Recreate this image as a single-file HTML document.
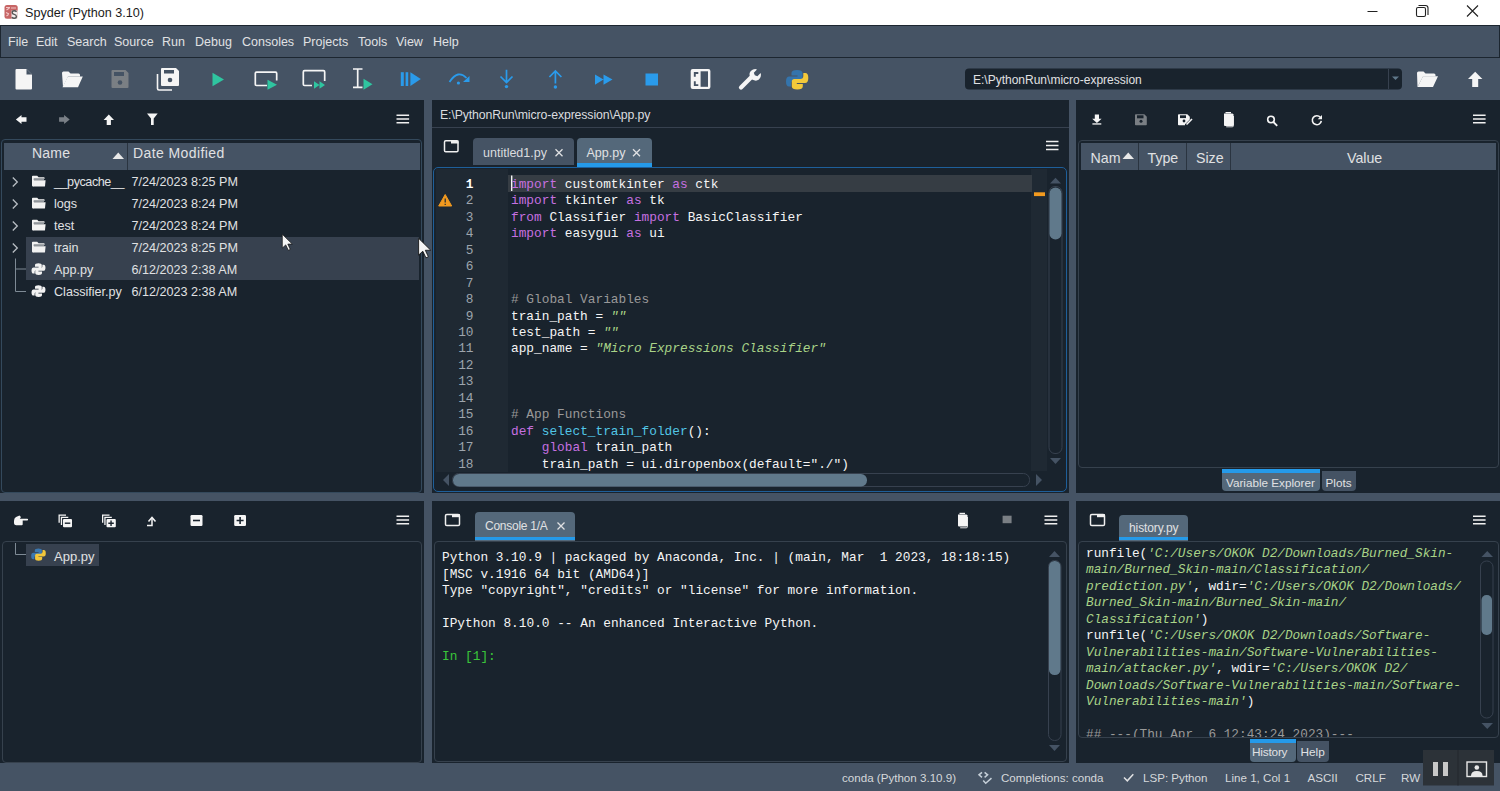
<!DOCTYPE html>
<html><head><meta charset="utf-8">
<style>
*{box-sizing:border-box;margin:0;padding:0}
html,body{width:1500px;height:791px;overflow:hidden;background:#455364;font-family:"Liberation Sans",sans-serif;position:relative}
.a{position:absolute}
.t{position:absolute;white-space:pre;line-height:1;color:#E0E1E3;font-size:13px}
.mn{font-size:12.5px;color:#E0E1E3}
.fe{font-size:12.6px;color:#E0E1E3}
.sb{font-size:11.6px;color:#D5D8DB}
.m{font-family:"Liberation Mono",monospace}
.k{font-style:normal;color:#C670E0}.c{font-style:normal;color:#999}.s{font-style:italic;color:#A9D488}.d{font-style:normal;color:#52C6E6}
.pane{position:absolute;background:#19232D}
svg{position:absolute;overflow:visible}
</style></head><body>
<!-- title bar -->
<div class="a" style="left:0;top:0;width:1500px;height:25px;background:#fff"></div>
<svg style="left:0;top:0" width="1500" height="25">
 <rect x="4.5" y="5" width="13.2" height="13.7" rx="2.5" fill="#C76565"/>
 <path d="M6 7.5 h4 M6.5 10 l3 -2 M6 12.5 l3 1.5 M6.5 16 l2 -1.5 M11 8 h5" stroke="#F2C6C6" stroke-width="1.1" fill="none"/>
 <rect x="11.5" y="10.5" width="6.2" height="8.2" fill="#F4EEEE"/>
 <path d="M16.6 11.8 q-1 -1 -2.4 -1 q-2 0 -2 1.7 q0 1.5 2 1.9 q2.2 .4 2.2 2 q0 1.8 -2.2 1.8 q-1.5 0 -2.5 -1" stroke="#555" stroke-width="1.4" fill="none"/>
 <path d="M1367.5 11.5 h10" stroke="#222" stroke-width="1"/>
 <rect x="1416.5" y="7.5" width="9" height="9" rx="1.5" fill="none" stroke="#222" stroke-width="1.1"/>
 <path d="M1418.5 5.5 h7 q2.5 0 2.5 2.5 v7" fill="none" stroke="#222" stroke-width="1.1"/>
 <path d="M1467 5.5 L1478 16.5 M1478 5.5 L1467 16.5" stroke="#222" stroke-width="1.1"/>
</svg>
<div class="t" style="left:25px;top:7px;color:#1b1b1b;font-size:12.6px">Spyder (Python 3.10)</div>

<!-- menubar -->
<div class="a" style="left:0;top:25px;width:1500px;height:33px;background:#455364;border:1px solid #1c2630"></div>
<div class="t mn" style="left:8px;top:36px">File</div>
<div class="t mn" style="left:36px;top:36px">Edit</div>
<div class="t mn" style="left:67px;top:36px">Search</div>
<div class="t mn" style="left:114px;top:36px">Source</div>
<div class="t mn" style="left:162px;top:36px">Run</div>
<div class="t mn" style="left:195px;top:36px">Debug</div>
<div class="t mn" style="left:242px;top:36px">Consoles</div>
<div class="t mn" style="left:303px;top:36px">Projects</div>
<div class="t mn" style="left:358px;top:36px">Tools</div>
<div class="t mn" style="left:396px;top:36px">View</div>
<div class="t mn" style="left:433px;top:36px">Help</div>

<!-- toolbar -->
<svg style="left:0;top:58px" width="1500" height="42" viewBox="0 58 1500 42">
 <!-- new file -->
 <path d="M15.5 70 q0 -1 1 -1 h10 l5.5 5.5 v14 q0 1 -1 1 h-14.5 q-1 0 -1 -1 z" fill="#F5F5F5"/>
 <path d="M26.5 69 v5.5 h5.5 z" fill="#455364"/>
 <!-- open folder -->
 <path d="M62 73 q0 -1.5 1.5 -1.5 h5 l2 2 h8 q1.5 0 1.5 1.5 v1.5 h-12 l-5 10.5 z" fill="#F5F5F5"/>
 <path d="M62.5 87.3 l5.3 -10.8 h15 l-4.8 10.8 z" fill="#F5F5F5"/>
 <!-- save gray -->
 <path d="M111.5 71 q0 -1 1 -1 h13 l3 3 v14 q0 1 -1 1 h-15 q-1 0 -1 -1 z" fill="#7A7F84"/>
 <rect x="114" y="72" width="10" height="4" fill="#455364"/>
 <circle cx="120" cy="82.5" r="2.3" fill="#455364"/>
 <!-- save all -->
 <path d="M157.5 74 v14.5 q0 1.5 1.5 1.5 h13" fill="none" stroke="#F5F5F5" stroke-width="1.6"/>
 <path d="M161 69 q0 -1 1 -1 h14 l3 3 v14 q0 1 -1 1 h-16 q-1 0 -1 -1 z" fill="#F5F5F5"/>
 <rect x="164" y="70" width="10" height="3.5" fill="#455364"/>
 <circle cx="170" cy="80" r="2.3" fill="#455364"/>
 <!-- run -->
 <path d="M212.5 72.7 L224 79.5 L212.5 86.3 z" fill="#2FC5A0"/>
 <!-- run cell -->
 <path d="M267 85.5 h-10.5 q-1.2 0 -1.2 -1.2 v-10.9 q0 -1.2 1.2 -1.2 h19 q1.2 0 1.2 1.2 v7" fill="none" stroke="#F5F5F5" stroke-width="1.7"/>
 <path d="M267.5 79.7 L277 84.7 L267.5 89.7 z" fill="#2FC5A0"/>
 <!-- run cell advance -->
 <path d="M312 85.5 h-7.5 q-1.2 0 -1.2 -1.2 v-12.4 q0 -1.2 1.2 -1.2 h19 q1.2 0 1.2 1.2 v9" fill="none" stroke="#F5F5F5" stroke-width="1.7"/>
 <path d="M314 81.3 L319.5 85 L314 88.8 z M319.5 81.3 L325 85 L319.5 88.8 z" fill="#2FC5A0"/>
 <!-- run selection -->
 <path d="M353 69 h9.5 M357.7 69 v18.3 M353 87.3 h9.5" stroke="#F5F5F5" stroke-width="1.7" fill="none"/>
 <path d="M363.5 78.8 L372.5 84.2 L363.5 89.7 z" fill="#2FC5A0"/>
 <!-- debug -->
 <rect x="400.8" y="72.2" width="3" height="13.8" fill="#2A9BEB"/>
 <rect x="405.6" y="72.2" width="2.6" height="13.8" fill="#2A9BEB"/>
 <path d="M410.4 72.2 L420.8 79.1 L410.4 86 z" fill="#2A9BEB"/>
 <!-- step over -->
 <path d="M449.5 82 q8.5 -13 17 -4" fill="none" stroke="#2A9BEB" stroke-width="1.8"/>
 <path d="M469.5 76 v6 h-6.5 z" fill="#2A9BEB"/>
 <circle cx="458.4" cy="83" r="1.6" fill="#2A9BEB"/>
 <!-- step into -->
 <path d="M506.5 69.8 v12.6 M500.5 76.5 l6 6 l6 -6" fill="none" stroke="#2A9BEB" stroke-width="1.7"/>
 <circle cx="506.5" cy="86.6" r="1.7" fill="#2A9BEB"/>
 <!-- step return -->
 <path d="M555.4 71 v12.6 M549.4 77 l6 -6 l6 6" fill="none" stroke="#2A9BEB" stroke-width="1.7"/>
 <circle cx="555.4" cy="87" r="1.7" fill="#2A9BEB"/>
 <!-- continue -->
 <path d="M595 74.5 L603.5 79.6 L595 84.7 z M603.5 74.5 L612.5 79.6 L603.5 84.7 z" fill="#2A9BEB"/>
 <!-- stop -->
 <rect x="645.5" y="73.5" width="12.5" height="12" fill="#2A9BEB"/>
 <!-- maximize -->
 <rect x="690.7" y="69" width="19.7" height="20.1" rx="2" fill="#F5F5F5"/>
 <rect x="700.6" y="71.3" width="7.4" height="15.5" fill="#455364"/>
 <path d="M698.3 73 h-3.5 v3.8 M698.3 85.1 h-3.5 v-3.8" fill="none" stroke="#455364" stroke-width="1.9"/>
 <!-- wrench -->
 <path d="M741 87.5 L752 76.5" stroke="#F5F5F5" stroke-width="4.2" stroke-linecap="round"/>
 <path d="M750.5 78 q-3 -6 2.5 -8.5 q2.5 -.8 4 0 l-3.2 3.2 l1 2.6 l2.6 1 l3.2 -3.2 q.8 1.5 0 4 q-2.5 5.5 -8.5 2.5 z" fill="#F5F5F5"/>
 <!-- python -->
 <path d="M797 70 q-5.5 0 -5.5 3 v2.5 h6 v1 h-8.2 q-3.3 0 -3.3 5 q0 5 3 5 h2 v-3 q0 -3 3 -3 h6 q2.5 0 2.5 -2.5 v-5 q0 -3 -5.5 -3 z" fill="#3474AC"/>
 <path d="M797.3 89.6 q5.5 0 5.5 -3 v-2.5 h-6 v-1 h8.2 q3.3 0 3.3 -5 q0 -5 -3 -5 h-2 v3 q0 3 -3 3 h-6 q-2.5 0 -2.5 2.5 v5 q0 3 5.5 3 z" fill="#F3C93A"/>
 <!-- combobox -->
 <rect x="965" y="68.5" width="437" height="21" rx="4" fill="#19232D"/>
 <path d="M1388.5 69 v20" stroke="#37414F" stroke-width="1"/>
 <path d="M1392 76.5 h7 l-3.5 3.5 z" fill="#60798B"/>
 <!-- folder open right -->
 <path d="M1417 73 q0 -1.5 1.5 -1.5 h5 l2 2 h8.5 q1.5 0 1.5 1.5 v1.5 h-12.5 l-5.5 10.5 z" fill="#F5F5F5"/>
 <path d="M1417.5 87.1 l5.5 -10.8 h15 l-5 10.8 z" fill="#F5F5F5"/>
 <!-- up arrow -->
 <path d="M1475.2 71.8 l7.2 7.3 h-4.2 v8 h-6 v-8 h-4.2 z" fill="#F5F5F5"/>
</svg>
<div class="t" style="left:973px;top:74px;font-size:12px;color:#E0E1E3">E:\PythonRun\micro-expression</div>
<!-- panes -->
<div class="pane" style="left:0;top:100px;width:424px;height:393px"></div>
<div class="pane" style="left:432px;top:100px;width:637px;height:393px"></div>
<div class="pane" style="left:1076px;top:100px;width:424px;height:393px"></div>
<div class="pane" style="left:0;top:501px;width:424px;height:262px"></div>
<div class="pane" style="left:432px;top:501px;width:637px;height:262px"></div>
<div class="pane" style="left:1076px;top:501px;width:424px;height:262px"></div>
<!-- ===== file explorer ===== -->
<div class="a" style="left:1px;top:139px;width:421px;height:354px;border:1px solid #34495C;border-radius:4px"></div>
<div class="a" style="left:4px;top:143px;width:416px;height:27px;background:#455364"></div>
<div class="a" style="left:127px;top:143px;width:1px;height:27px;background:#2a3440"></div>
<div class="a" style="left:26px;top:236.5px;width:393px;height:43px;background:#37414F"></div>
<svg style="left:0;top:100px" width="424" height="392" viewBox="0 100 424 392">
 <path d="M15.9 119.5 l5.6 -4.5 v2.3 h5 v4.4 h-5 v2.3 z" fill="#F5F5F5"/>
 <path d="M69.7 119.5 l-5.6 -4.5 v2.3 h-5 v4.4 h5 v2.3 z" fill="#7A8087"/>
 <path d="M108.8 114.6 l5.2 5.5 h-3.1 v4.8 h-4.2 v-4.8 h-3.1 z" fill="#F5F5F5"/>
 <path d="M147 113.5 h10.7 l-4 5 v6.5 h-2.7 v-6.5 z" fill="#F5F5F5"/>
 <path d="M396.5 115.3 h12.6 M396.5 119 h12.6 M396.5 122.7 h12.6" stroke="#F0F0F0" stroke-width="1.5"/>
 <!-- sort arrow -->
 <path d="M112.5 159 l5.75 -6.5 l5.75 6.5 z" fill="#E8E8E8"/>
 <!-- chevrons -->
 <g fill="none" stroke="#B8BEC4" stroke-width="1.3">
  <path d="M12.8 177.5 l4.5 4.5 l-4.5 4.5"/>
  <path d="M12.8 199.5 l4.5 4.5 l-4.5 4.5"/>
  <path d="M12.8 221.5 l4.5 4.5 l-4.5 4.5"/>
  <path d="M12.8 243.5 l4.5 4.5 l-4.5 4.5"/>
 </g>
 <!-- tree lines -->
 <path d="M15.5 258.5 v33 h10.5 M15.5 269 h10.5" fill="none" stroke="#7E8A95" stroke-width="1"/>
 <!-- folders -->
 <g fill="#F2F2F2">
  <g id="fd"><path d="M32 176.6 q0 -.8 .8 -.8 h4.4 l1.4 1.5 h5.4 q.6 0 .6 .6 v.9 h-10.6 v7.6 h-1 q-1 0 -1 -1 z"/><path d="M33.6 178.4 h10.4 v1.7 h-10.4 z" fill="#8F949A"/><path d="M33.6 180.2 h12 l-.6 5.7 q-.1 .5 -.6 .5 h-10.8 z"/></g>
  <use href="#fd" y="22"/><use href="#fd" y="44"/><use href="#fd" y="66"/>
 </g>
 <g id="pyw" fill="#F2F2F2" transform="translate(38.5 269.1) scale(0.86) translate(-38.3 -270.5)">
  <path d="M38.2 263.7 q-4 0 -4 2.2 v1.8 h4.2 v.8 h-5.8 q-2.4 0 -2.4 3.6 q0 3.6 2.2 3.6 h1.4 v-2.1 q0 -2.2 2.2 -2.2 h4.3 q1.8 0 1.8 -1.8 v-3.7 q0 -2.2 -3.9 -2.2 z"/>
  <path d="M38.4 277.3 q4 0 4 -2.2 v-1.8 h-4.2 v-.8 h5.8 q2.4 0 2.4 -3.6 q0 -3.6 -2.2 -3.6 h-1.4 v2.1 q0 2.2 -2.2 2.2 h-4.3 q-1.8 0 -1.8 1.8 v3.7 q0 2.2 3.9 2.2 z"/>
 </g>
 <use href="#pyw" y="22"/>
</svg>
<div class="t" style="left:32px;top:145.7px;font-size:14px;letter-spacing:0.2px">Name</div>
<div class="t" style="left:133px;top:145.7px;font-size:14px;letter-spacing:0.4px">Date Modified</div>
<div class="t fe" style="left:54px;top:176px;letter-spacing:-0.45px">__pycache__</div>
<div class="t fe" style="left:54px;top:198px">logs</div>
<div class="t fe" style="left:54px;top:220px">test</div>
<div class="t fe" style="left:54px;top:242px">train</div>
<div class="t fe" style="left:54px;top:264px">App.py</div>
<div class="t fe" style="left:54px;top:286px">Classifier.py</div>
<div class="t fe" style="left:131.5px;top:176px">7/24/2023 8:25 PM</div>
<div class="t fe" style="left:131.5px;top:198px">7/24/2023 8:24 PM</div>
<div class="t fe" style="left:131.5px;top:220px">7/24/2023 8:24 PM</div>
<div class="t fe" style="left:131.5px;top:242px">7/24/2023 8:25 PM</div>
<div class="t fe" style="left:131.5px;top:264px">6/12/2023 2:38 AM</div>
<div class="t fe" style="left:131.5px;top:286px">6/12/2023 2:38 AM</div>
<!-- ===== editor ===== -->
<div class="t" style="left:440px;top:108.5px;font-size:12.3px;letter-spacing:-0.12px;color:#DADCDF">E:\PythonRun\micro-expression\App.py</div>
<div class="a" style="left:432px;top:126.5px;width:637px;height:1px;background:#37414F"></div>
<!-- tabs -->
<div class="a" style="left:473px;top:138px;width:101px;height:26.5px;background:#455364;border-radius:4px 4px 0 0"></div>
<div class="a" style="left:577px;top:138px;width:75px;height:29px;background:#54687A;border-radius:4px 4px 0 0"></div>
<div class="a" style="left:577px;top:163px;width:75px;height:4px;background:#259AE9"></div>
<div class="t" style="left:483px;top:147.3px;font-size:12.5px;color:#DADCDF">untitled1.py</div>
<div class="t" style="left:586.5px;top:147.3px;font-size:12.5px;color:#E0E1E3">App.py</div>
<!-- editor box -->
<div class="a" style="left:433px;top:167px;width:634px;height:325px;border:1.5px solid #1E5F9A;border-radius:5px;background:#19232D"></div>
<div class="a" style="left:435.5px;top:169px;width:72.5px;height:302.5px;background:#1F2933"></div>
<div class="a" style="left:1031px;top:169px;width:16px;height:302px;background:#1F2933"></div>
<div class="a" style="left:508px;top:175px;width:523.5px;height:16.5px;background:#363D44"></div>
<svg style="left:432px;top:100px" width="637" height="392" viewBox="432 100 637 392">
 <!-- window icon -->
 <rect x="444.5" y="140.8" width="13.5" height="11" rx="1.3" fill="none" stroke="#F0F0F0" stroke-width="1.5"/>
 <rect x="451" y="140.5" width="7.5" height="3" fill="#F0F0F0"/>
 <!-- close x -->
 <path d="M555.5 149.3 l7 7 M562.5 149.3 l-7 7" stroke="#E0E1E3" stroke-width="1.3"/>
 <path d="M633 149.3 l7 7 M640 149.3 l-7 7" stroke="#E0E1E3" stroke-width="1.3"/>
 <!-- hamburger -->
 <path d="M1046 141.5 h12.5 M1046 145.5 h12.5 M1046 149.5 h12.5" stroke="#F0F0F0" stroke-width="1.5"/>
 <!-- warning -->
 <path d="M445.2 194.5 l6.5 11.5 h-13 z" fill="#F29A1F" stroke="#F29A1F" stroke-width="1" stroke-linejoin="round"/>
 <path d="M445.2 198.5 v4 M445.2 203.8 v1.2" stroke="#1F2933" stroke-width="1.2"/>
 <!-- cursor -->
 <rect x="511" y="175.5" width="1.4" height="15.5" fill="#F5F5F5"/>
 <!-- flag -->
 <rect x="1034" y="192.3" width="11" height="3.8" fill="#F29A1F"/>
 <!-- v scrollbar -->
 <path d="M1050 183.5 l5.5 -5.8 l5.5 5.8 z" fill="#455364"/>
 <rect x="1049" y="186.5" width="13" height="267" rx="6" fill="none" stroke="#37414F" stroke-width="1"/>
 <rect x="1049.5" y="187.5" width="12" height="52" rx="6" fill="#60798B"/>
 <path d="M1050 458 h11 l-5.5 6 z" fill="#455364"/>
 <!-- h scrollbar -->
 <path d="M449 474 v12 l-6 -6 z" fill="#455364"/>
 <rect x="452.5" y="473.5" width="577" height="13" rx="6" fill="none" stroke="#37414F" stroke-width="1"/>
 <rect x="453" y="474" width="414" height="12.5" rx="6" fill="#60798B"/>
 <path d="M1036 474 v12 l6 -6 z" fill="#455364"/>
</svg>
<div class="a m" style="left:435px;top:176.8px;width:38.5px;text-align:right;font-size:12.8px;line-height:16.47px;color:#9DA5AD;white-space:pre"><b style="color:#fff">1</b>
2
3
4
5
6
7
8
9
10
11
12
13
14
15
16
17
18</div>
<div class="a m" style="left:511px;top:176.8px;font-size:12.8px;line-height:16.47px;color:#F5F5F5;white-space:pre"><i class="k">import</i> customtkinter <i class="k">as</i> ctk
<i class="k">import</i> tkinter <i class="k">as</i> tk
<i class="k">from</i> Classifier <i class="k">import</i> BasicClassifier
<i class="k">import</i> easygui <i class="k">as</i> ui



<i class="c"># Global Variables</i>
train_path = <i class="s">""</i>
test_path = <i class="s">""</i>
app_name = <i class="s">"Micro Expressions Classifier"</i>



<i class="c"># App Functions</i>
<i class="k">def</i> <i class="d">select_train_folder</i>():
    <i class="k">global</i> train_path
    train_path = ui.diropenbox(default="./")</div>
<!-- ===== variable explorer ===== -->
<div class="a" style="left:1078px;top:139.5px;width:420.5px;height:328px;border:1px solid #36414D;border-radius:4px"></div>
<div class="a" style="left:1081px;top:143px;width:415px;height:27px;background:#455364"></div>
<div class="a" style="left:1138px;top:143px;width:1px;height:27px;background:#2a3440"></div>
<div class="a" style="left:1186px;top:143px;width:1px;height:27px;background:#2a3440"></div>
<div class="a" style="left:1230px;top:143px;width:1px;height:27px;background:#2a3440"></div>
<div class="t" style="left:1090.5px;top:151px;font-size:14.2px">Nam</div>
<div class="t" style="left:1147.5px;top:151px;font-size:14.2px">Type</div>
<div class="t" style="left:1196px;top:151px;font-size:14.2px">Size</div>
<div class="t" style="left:1347px;top:151px;font-size:14.2px">Value</div>
<!-- bottom tabs -->
<div class="a" style="left:1222px;top:469px;width:98px;height:22px;background:#54687A;border-radius:0 0 4px 4px"></div>
<div class="a" style="left:1222px;top:469px;width:98px;height:3.5px;background:#259AE9"></div>
<div class="a" style="left:1322px;top:471px;width:34px;height:20px;background:#455364;border-radius:0 0 4px 4px"></div>
<div class="t" style="left:1226px;top:476.5px;font-size:11.7px">Variable Explorer</div>
<div class="t" style="left:1325.5px;top:476.5px;font-size:11.7px">Plots</div>
<svg style="left:1076px;top:100px" width="424" height="392" viewBox="1076 100 424 392">
 <g fill="#F5F5F5">
  <!-- download -->
  <path d="M1094.8 114.5 h4.2 v4.3 h2.6 l-4.7 4.3 l-4.7 -4.3 h2.6 z"/>
  <rect x="1092.4" y="123.3" width="8.9" height="1.3"/>
  <!-- save-edit -->
  <path d="M1178 115 q0 -.8 .8 -.8 h8.5 l2.5 2.5 v2.8 l-4.8 4.8 v.9 h-6.2 q-.8 0 -.8 -.8 z"/>
  <!-- trash copies -->
  <path d="M1224 113.5 h8.5 l1 1 v10.5 q0 1 -1 1 h-7.5 q-1 0 -1 -1 z"/>
  <rect x="1225.5" y="112" width="5.5" height="1.3"/>
 </g>
 <path d="M1135 115 q0 -.8 .8 -.8 h8.5 l2.5 2.5 v7.7 q0 .8 -.8 .8 h-10.2 q-.8 0 -.8 -.8 z" fill="#7A7F84"/>
 <rect x="1137" y="115.3" width="6.5" height="3" fill="#19232D"/>
 <circle cx="1141" cy="121.3" r="1.5" fill="#19232D"/>
 <rect x="1180" y="115.3" width="6" height="2.8" fill="#19232D"/>
 <circle cx="1184" cy="121" r="1.4" fill="#19232D"/>
 <path d="M1186.5 124.5 l5.5 -5.5" stroke="#F5F5F5" stroke-width="1.6"/>
 <path d="M1233.5 116 v9.5 q0 1.3 -1.3 1.3 h-6" fill="none" stroke="#F5F5F5" stroke-width=".9"/>
 <circle cx="1271" cy="119.5" r="3.3" fill="none" stroke="#F5F5F5" stroke-width="1.6"/>
 <path d="M1273.4 122 l3.8 3.8" stroke="#F5F5F5" stroke-width="1.8"/>
 <path d="M1320.3 117.3 a4.5 4.5 0 1 0 1 3.5" fill="none" stroke="#F5F5F5" stroke-width="1.6"/>
 <path d="M1322 115 v4.3 h-4.3 z" fill="#F5F5F5"/>
 <path d="M1473 115.3 h12.6 M1473 119 h12.6 M1473 122.7 h12.6" stroke="#F0F0F0" stroke-width="1.5"/>
 <path d="M1122.5 159 l5.75 -6.5 l5.75 6.5 z" fill="#E8E8E8"/>
</svg>
<!-- ===== outline ===== -->
<div class="a" style="left:1.5px;top:541px;width:420px;height:221.5px;border:1px solid #36414D;border-radius:4px"></div>
<div class="a" style="left:26px;top:543.5px;width:72.5px;height:22px;background:#37414F"></div>
<div class="t" style="left:54px;top:549.5px;font-size:13px">App.py</div>
<svg style="left:0;top:501px" width="424" height="262" viewBox="0 501 424 262">
 <g fill="#F5F5F5">
  <!-- hand -->
  <path d="M14 521 q0 -3 2 -4 l3.5 -1.5 l1.5 1.5 l-1.2 1.7 h7.4 q.9 0 .9 .9 q0 .9 -.9 .9 h-4.5 v3.8 q0 1 -1 1 h-5.5 q-2 0 -2.2 -2 z"/>
  <!-- collapse all -->
  <path d="M58.5 514.5 h7.5 v1.3 h-6.2 v7 h-1.3 z M60.8 516.8 h7.5 v1.3 h-6.2 v7 h-1.3 z"/>
  <rect x="63" y="519" width="9" height="8.3" rx="1"/>
  <!-- expand all -->
  <path d="M102 514.5 h7.5 v1.3 h-6.2 v7 h-1.3 z M104.3 516.8 h7.5 v1.3 h-6.2 v7 h-1.3 z"/>
  <rect x="106.5" y="519" width="9.3" height="8.3" rx="1"/>
  <!-- boxes -->
  <rect x="190.5" y="515" width="12" height="11" rx="1.2"/>
  <rect x="234.2" y="515" width="11.8" height="11" rx="1.2"/>
 </g>
 <path d="M64.8 523.2 h5.5" stroke="#19232D" stroke-width="1.4"/>
 <path d="M108.3 523.2 h5.5 M111.05 520.5 v5.5" stroke="#19232D" stroke-width="1.4"/>
 <path d="M193 520.5 h7" stroke="#19232D" stroke-width="1.6"/>
 <path d="M236.6 520.5 h7 M240.1 517 v7" stroke="#19232D" stroke-width="1.6"/>
 <path d="M147 525.5 h5 v-7" fill="none" stroke="#F5F5F5" stroke-width="1.5"/>
 <path d="M148.5 521.5 l3.5 -4 l3.5 4" fill="none" stroke="#F5F5F5" stroke-width="1.5"/>
 <path d="M396.5 516.3 h12.6 M396.5 520 h12.6 M396.5 523.7 h12.6" stroke="#F0F0F0" stroke-width="1.5"/>
 <path d="M15.5 543 v11.5 h10.5" fill="none" stroke="#7E8A95" stroke-width="1"/>
 <!-- python color --><g transform="translate(38.5 554.6) scale(0.9) translate(-38.3 -554.8)">
 <path d="M38.2 548 q-4 0 -4 2.2 v1.8 h4.2 v.8 h-5.8 q-2.4 0 -2.4 3.6 q0 3.6 2.2 3.6 h1.4 v-2.1 q0 -2.2 2.2 -2.2 h4.3 q1.8 0 1.8 -1.8 v-3.7 q0 -2.2 -3.9 -2.2 z" fill="#3B78B0"/>
 <path d="M38.4 561.6 q4 0 4 -2.2 v-1.8 h-4.2 v-.8 h5.8 q2.4 0 2.4 -3.6 q0 -3.6 -2.2 -3.6 h-1.4 v2.1 q0 2.2 -2.2 2.2 h-4.3 q-1.8 0 -1.8 1.8 v3.7 q0 2.2 3.9 2.2 z" fill="#F2C73B"/></g>
</svg>
<!-- ===== console ===== -->
<div class="a" style="left:475px;top:512px;width:100px;height:28.5px;background:#54687A;border-radius:4px 4px 0 0"></div>
<div class="a" style="left:475px;top:536.8px;width:100px;height:3.7px;background:#259AE9"></div>
<div class="t" style="left:485px;top:520px;font-size:12px;letter-spacing:-0.25px">Console 1/A</div>
<div class="a" style="left:434px;top:541.3px;width:632.5px;height:221px;border:1px solid #36414D;border-radius:4px"></div>
<svg style="left:432px;top:501px" width="637" height="262" viewBox="432 501 637 262">
 <rect x="445.5" y="514.5" width="14" height="11" rx="1.3" fill="none" stroke="#F0F0F0" stroke-width="1.5"/>
 <rect x="452" y="514.2" width="8" height="3" fill="#F0F0F0"/>
 <path d="M557.5 522.5 l7 7 M564.5 522.5 l-7 7" stroke="#E0E1E3" stroke-width="1.3"/>
 <!-- trash -->
 <path d="M958 514.5 h8.5 l1 1 v10 q0 1 -1 1 h-7.5 q-1 0 -1 -1 z" fill="#F5F5F5"/>
 <rect x="959.5" y="512.8" width="5.5" height="1.3" fill="#F5F5F5"/>
 <path d="M967.5 517 v9.5 q0 1.3 -1.3 1.3 h-6" fill="none" stroke="#F5F5F5" stroke-width=".9"/>
 <rect x="1002.6" y="515.7" width="9" height="7.5" fill="#7A7F84"/>
 <path d="M1044.5 516.3 h12.8 M1044.5 520 h12.8 M1044.5 523.7 h12.8" stroke="#F0F0F0" stroke-width="1.5"/>
 <!-- scrollbar -->
 <path d="M1049 557 l5.5 -6 l5.5 6 z" fill="#455364"/>
 <rect x="1048.5" y="560.5" width="12.5" height="180" rx="6" fill="none" stroke="#37414F" stroke-width="1"/>
 <rect x="1049" y="561" width="11.5" height="114" rx="5.5" fill="#60798B"/>
 <path d="M1049 745 h11 l-5.5 6 z" fill="#455364"/>
</svg>
<div class="a m" style="left:442px;top:550.3px;font-size:12.8px;line-height:16.5px;color:#F5F5F5;white-space:pre">Python 3.10.9 | packaged by Anaconda, Inc. | (main, Mar  1 2023, 18:18:15)
[MSC v.1916 64 bit (AMD64)]
Type "copyright", "credits" or "license" for more information.

IPython 8.10.0 -- An enhanced Interactive Python.

<span style="color:#39C53A">In [1]:</span></div>
<!-- ===== history ===== -->
<div class="a" style="left:1119px;top:515px;width:69px;height:25.5px;background:#54687A;border-radius:4px 4px 0 0"></div>
<div class="a" style="left:1119px;top:536.8px;width:69px;height:3.7px;background:#259AE9"></div>
<div class="t" style="left:1129px;top:521.5px;font-size:12px;letter-spacing:-0.1px">history.py</div>
<div class="a" style="left:1078px;top:541.3px;width:420.5px;height:197px;border:1px solid #36414D;border-radius:4px"></div>
<div class="a" style="left:1084px;top:543px;width:392px;height:194px;overflow:hidden">
<div class="a m" style="left:2px;top:2.8px;font-size:12.75px;line-height:16.5px;color:#F5F5F5;white-space:pre">runfile(<i class="s">'C:/Users/OKOK D2/Downloads/Burned_Skin-
main/Burned_Skin-main/Classification/
prediction.py'</i>, wdir=<i class="s">'C:/Users/OKOK D2/Downloads/
Burned_Skin-main/Burned_Skin-main/
Classification'</i>)
runfile(<i class="s">'C:/Users/OKOK D2/Downloads/Software-
Vulnerabilities-main/Software-Vulnerabilities-
main/attacker.py'</i>, wdir=<i class="s">'C:/Users/OKOK D2/
Downloads/Software-Vulnerabilities-main/Software-
Vulnerabilities-main'</i>)

<i class="c">## ---(Thu Apr  6 12:43:24 2023)---</i></div></div>
<!-- bottom tabs -->
<div class="a" style="left:1250px;top:739px;width:46px;height:22.5px;background:#54687A;border-radius:0 0 4px 4px"></div>
<div class="a" style="left:1250px;top:739px;width:46px;height:3.5px;background:#259AE9"></div>
<div class="a" style="left:1297px;top:741px;width:32px;height:20.5px;background:#455364;border-radius:0 0 4px 4px"></div>
<div class="t" style="left:1252px;top:746.5px;font-size:11.8px;letter-spacing:-0.2px">History</div>
<div class="t" style="left:1300.5px;top:746.5px;font-size:11.8px">Help</div>
<svg style="left:1076px;top:501px" width="424" height="262" viewBox="1076 501 424 262">
 <rect x="1090.5" y="514.5" width="14" height="11" rx="1.3" fill="none" stroke="#F0F0F0" stroke-width="1.5"/>
 <rect x="1097" y="514.2" width="8" height="3" fill="#F0F0F0"/>
 <path d="M1473 516.3 h12.6 M1473 520 h12.6 M1473 523.7 h12.6" stroke="#F0F0F0" stroke-width="1.5"/>
 <path d="M1481.5 557 l5.75 -6 l5.75 6 z" fill="#455364"/>
 <rect x="1480.5" y="561" width="12.5" height="157" rx="6" fill="none" stroke="#37414F" stroke-width="1"/>
 <rect x="1481.5" y="595" width="10.5" height="40" rx="5" fill="#60798B"/>
 <path d="M1481.5 723 h11.5 l-5.75 6 z" fill="#455364"/>
</svg>
<!-- ===== status bar ===== -->
<div class="t sb" style="left:842px;top:772.3px">conda (Python 3.10.9)</div>
<div class="t sb" style="left:1001px;top:772.3px">Completions: conda</div>
<div class="t sb" style="left:1143px;top:772.3px">LSP: Python</div>
<div class="t sb" style="left:1225px;top:772.3px">Line 1, Col 1</div>
<div class="t sb" style="left:1307.5px;top:772.3px">ASCII</div>
<div class="t sb" style="left:1355.5px;top:772.3px">CRLF</div>
<div class="t sb" style="left:1401px;top:772.3px">RW</div>
<svg style="left:0;top:740px" width="1500" height="51" viewBox="0 740 1500 51">
 <path d="M982 772.3 l-3 2.5 l3 2.5 M984.6 772.3 l3 2.5 l-3 2.5 M983.2 780.5 l2.5 2.8 l5.8 -5.2" fill="none" stroke="#C5CFD8" stroke-width="1.5"/>
 <path d="M1124 777.5 l3.3 3.3 l6 -6.5" fill="none" stroke="#E0E1E3" stroke-width="1.5"/>
 <rect x="1423" y="750" width="71" height="35.5" fill="#2C3238"/>
 <rect x="1457.5" y="750" width="1" height="35.5" fill="#22272C"/>
 <rect x="1433" y="762" width="5" height="14" fill="#C8C8C8"/>
 <rect x="1443" y="762" width="5" height="14" fill="#C8C8C8"/>
 <rect x="1467" y="762" width="19.5" height="14.5" fill="none" stroke="#E8E8E8" stroke-width="1.4"/>
 <circle cx="1476.8" cy="767.5" r="2.3" fill="#E8E8E8"/>
 <path d="M1471 776 q0 -5 5.8 -5 q5.8 0 5.8 5 z" fill="#E8E8E8"/>
</svg>
<!-- cursors -->
<svg style="left:0;top:0" width="1500" height="791">
 <path transform="translate(282.3 234.3) scale(0.86)" d="M0 0 L0 16 L4 12.3 L7 18.6 L9.3 17.6 L6.4 11.4 L11.6 11.4 Z" fill="#F5F5F5" stroke="#111" stroke-width="0.8"/>
 <path transform="translate(418.6 238.3) scale(1.05)" d="M0 0 L0 16 L4 12.3 L7 18.6 L9.3 17.6 L6.4 11.4 L11.6 11.4 Z" fill="#F5F5F5" stroke="#111" stroke-width="0.8"/>
</svg>
</body></html>
